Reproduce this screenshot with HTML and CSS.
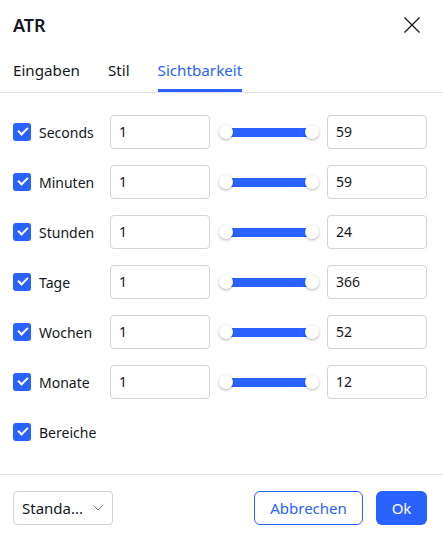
FILE: index.html
```html
<!DOCTYPE html>
<html lang="de">
<head>
    <meta charset="UTF-8">
    <title>ATR</title>
    <link rel="stylesheet" href="styles.css">
</head>
<body>
    <div class="dialog">
        <!-- Header -->
        <div class="header">
            <span class="title">ATR</span>
            <svg class="close" width="18" height="18" viewBox="0 0 18 18">
                <path d="M1.5 1.5 L16.5 16.5 M16.5 1.5 L1.5 16.5" stroke="#131722" stroke-width="1.3" fill="none"/>
            </svg>
        </div>

        <!-- Tabs -->
        <div class="tabs">
            <div class="tab">Eingaben</div>
            <div class="tab">Stil</div>
            <div class="tab active">Sichtbarkeit</div>
        </div>

        <!-- Content -->
        <div class="content">
            <div class="row">
                <div class="check"><span class="box"></span>Seconds</div>
                <div class="field">1</div>
                <div class="slider"><span class="track"></span><span class="knob"></span><span class="knob"></span></div>
                <div class="field">59</div>
            </div>
            <div class="row">
                <div class="check"><span class="box"></span>Minuten</div>
                <div class="field">1</div>
                <div class="slider"><span class="track"></span><span class="knob"></span><span class="knob"></span></div>
                <div class="field">59</div>
            </div>
            <div class="row">
                <div class="check"><span class="box"></span>Stunden</div>
                <div class="field">1</div>
                <div class="slider"><span class="track"></span><span class="knob"></span><span class="knob"></span></div>
                <div class="field">24</div>
            </div>
            <div class="row">
                <div class="check"><span class="box"></span>Tage</div>
                <div class="field">1</div>
                <div class="slider"><span class="track"></span><span class="knob"></span><span class="knob"></span></div>
                <div class="field">366</div>
            </div>
            <div class="row">
                <div class="check"><span class="box"></span>Wochen</div>
                <div class="field">1</div>
                <div class="slider"><span class="track"></span><span class="knob"></span><span class="knob"></span></div>
                <div class="field">52</div>
            </div>
            <div class="row">
                <div class="check"><span class="box"></span>Monate</div>
                <div class="field">1</div>
                <div class="slider"><span class="track"></span><span class="knob"></span><span class="knob"></span></div>
                <div class="field">12</div>
            </div>
            <div class="row">
                <div class="check"><span class="box"></span>Bereiche</div>
            </div>
        </div>

        <!-- Footer -->
        <div class="footer">
            <div class="select">
                <span>Standa...</span>
                <svg width="10" height="6" viewBox="0 0 10 6">
                    <path d="M0.5 0.5 L5 5 L9.5 0.5" stroke="#787b86" stroke-width="1" fill="none"/>
                </svg>
            </div>
            <div class="buttons">
                <div class="btn ghost">Abbrechen</div>
                <div class="btn primary">Ok</div>
            </div>
        </div>
    </div>
</body>
</html>
```

FILE: styles.css
```css
/* Reset */
* {
    margin: 0;
    padding: 0;
    box-sizing: border-box;
}

body {
    width: 443px;
    height: 533px;
    overflow: hidden;
    background-color: #fff;
    font-family: 'Noto Sans', sans-serif;
    color: #131722;
}

.dialog {
    width: 443px;
    display: flex;
    flex-direction: column;
}

/* Header */
.header {
    height: 50px;
    padding: 0 22px 0 13px;
    display: flex;
    align-items: center;
    justify-content: space-between;
}

.title {
    font-size: 18px;
    font-weight: 600;
}

/* Tabs */
.tabs {
    height: 43px;
    padding-left: 13px;
    display: flex;
    gap: 28px;
    border-bottom: 1px solid #e0e3eb;
}

.tab {
    font-size: 15.2px;
    line-height: 40px;
    color: #131722;
    height: 42px;
}

.tab.active {
    color: #2962ff;
    border-bottom: 3px solid #2962ff;
}

/* Content */
.content {
    padding: 14px 16px 17px 13px;
    border-bottom: 1px solid #e0e3eb;
}

.row {
    height: 50px;
    display: flex;
    align-items: center;
}

.check {
    width: 97px;
    display: flex;
    align-items: center;
    gap: 8px;
    font-size: 14px;
}

.box {
    width: 18px;
    height: 18px;
    border-radius: 3px;
    background-color: #2962ff;
    position: relative;
}

.box::after {
    content: '';
    position: absolute;
    left: 5px;
    top: 4px;
    width: 8px;
    height: 4px;
    border-left: 2px solid #fff;
    border-bottom: 2px solid #fff;
    transform: rotate(-45deg);
}

.field {
    width: 100px;
    height: 34px;
    border: 1px solid #d1d4dc;
    border-radius: 4px;
    padding-left: 8px;
    font-size: 14px;
    line-height: 32px;
}

/* Slider */
.slider {
    width: 100px;
    height: 16px;
    margin: 0 8px 0 9px;
    position: relative;
    display: flex;
    align-items: center;
    justify-content: space-between;
}

.track {
    position: absolute;
    left: 6px;
    right: 6px;
    top: 4px;
    height: 9px;
    background-color: #2962ff;
}

.knob {
    width: 14px;
    height: 14px;
    border-radius: 50%;
    background-color: #fff;
    box-shadow: 0 1px 3px rgba(0,0,0,0.3);
    position: relative;
}

/* Footer */
.footer {
    padding: 16px 16px 0 13px;
    display: flex;
    justify-content: space-between;
    align-items: center;
}

.select {
    width: 100px;
    height: 34px;
    border: 1px solid #d1d4dc;
    border-radius: 4px;
    padding: 0 9px 0 8px;
    display: flex;
    align-items: center;
    justify-content: space-between;
    font-size: 15px;
}

.buttons {
    display: flex;
    gap: 13px;
}

.btn {
    height: 34px;
    border-radius: 6px;
    font-size: 15px;
    display: flex;
    align-items: center;
    justify-content: center;
}

.btn.ghost {
    width: 109px;
    border: 1px solid #2962ff;
    color: #2962ff;
}

.btn.primary {
    width: 51px;
    background-color: #2962ff;
    color: #fff;
}
```
